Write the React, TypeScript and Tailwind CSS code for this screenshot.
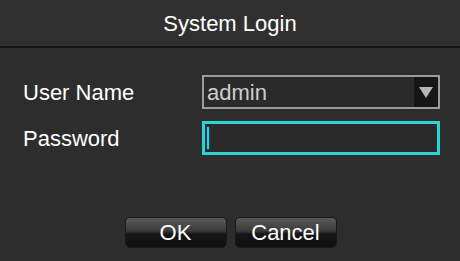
import React from 'react';

const font = { fontFamily: '"Liberation Sans", Arial, sans-serif' };

const Button: React.FC<{ label: string }> = ({ label }) => (
  <button className="w-[102px] h-[31px] rounded-[5px] border border-[#1a1a1a] bg-[linear-gradient(to_bottom,#5a5a5a_0%,#3a3a3a_45%,#161616_55%,#101010_100%)] text-white text-[22px] leading-none flex items-center justify-center">
    {label}
  </button>
);

export default function App() {
  return (
    <div className="w-[460px] h-[261px] bg-[#2d2d2d] flex flex-col text-white" style={font}>
      <div className="h-[48px] bg-[#303030] flex items-center justify-center text-[22px] border-b-2 border-[#141414]">
        System Login
      </div>
      <div className="flex flex-col gap-[12px] pl-[23px] pt-[27px]">
        <div className="flex items-center h-[34px]">
          <span className="w-[179px] text-[22px]">User Name</span>
          <div className="w-[238px] h-[34px] border-2 border-[#9c9c9c] bg-[#2a2a2a] flex items-center justify-between">
            <span className="pl-[3px] text-[22px] text-[#cfcfcf]">admin</span>
            <div className="w-[24px] h-full bg-[#161616] flex items-center justify-center">
              <svg width="16" height="14" viewBox="0 0 16 14">
                <polygon points="1,2 15,2 8,13" fill="#b5b5b5" />
              </svg>
            </div>
          </div>
        </div>
        <div className="flex items-center h-[34px]">
          <span className="w-[179px] text-[22px]">Password</span>
          <div className="w-[238px] h-[34px] border-[3px] border-[#2ad4d4] bg-[#2a2a2a] flex items-center pl-[1px]">
            <div className="w-[4px] h-[24px] bg-[#2ad4d4] border border-[#1a3f5a]" />
          </div>
        </div>
      </div>
      <div className="flex justify-center gap-[8px] mt-[62px] pl-[1px]">
        <Button label="OK" />
        <Button label="Cancel" />
      </div>
    </div>
  );
}
